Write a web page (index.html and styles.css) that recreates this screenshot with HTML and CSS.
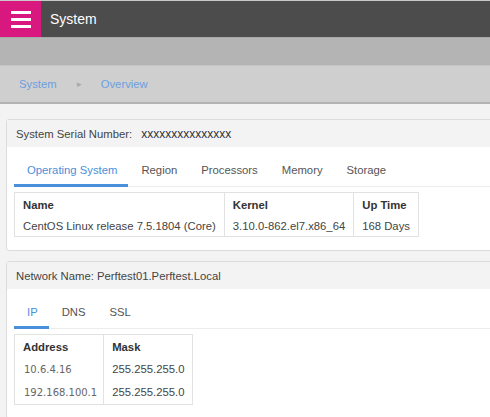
FILE: index.html
```
<!DOCTYPE html>
<html lang="en">
<head>
    <meta charset="UTF-8">
    <title>System</title>
    <link rel="stylesheet" href="styles.css">
</head>
<body>
    <div class="topbar">
        <div class="menu-btn">
            <svg width="20" height="18" viewBox="0 0 20 18">
                <rect x="0" y="1" width="20" height="3" fill="#fff"/>
                <rect x="0" y="8" width="20" height="3" fill="#fff"/>
                <rect x="0" y="15" width="20" height="3" fill="#fff"/>
            </svg>
        </div>
        <div class="title">System</div>
    </div>
    <div class="subbar"></div>
    <div class="breadcrumb">
        <a>System</a>
        <span class="sep">&#9656;</span>
        <a>Overview</a>
    </div>

    <div class="content">
        <div class="card">
            <div class="card-header">System Serial Number: <span class="serial">xxxxxxxxxxxxxxx</span></div>
            <div class="card-body">
                <div class="tabs">
                    <div class="tab active">Operating System</div>
                    <div class="tab">Region</div>
                    <div class="tab">Processors</div>
                    <div class="tab">Memory</div>
                    <div class="tab">Storage</div>
                </div>
                <table class="info">
                    <tr><th>Name</th><th>Kernel</th><th>Up Time</th></tr>
                    <tr><td>CentOS Linux release 7.5.1804 (Core)</td><td>3.10.0-862.el7.x86_64</td><td>168 Days</td></tr>
                </table>
            </div>
        </div>

        <div class="card">
            <div class="card-header">Network Name: Perftest01.Perftest.Local</div>
            <div class="card-body">
                <div class="tabs">
                    <div class="tab active">IP</div>
                    <div class="tab">DNS</div>
                    <div class="tab">SSL</div>
                </div>
                <table class="info net">
                    <tr><th>Address</th><th>Mask</th></tr>
                    <tr><td class="addr">10.6.4.16</td><td>255.255.255.0</td></tr>
                    <tr><td class="addr">192.168.100.1</td><td>255.255.255.0</td></tr>
                </table>
            </div>
        </div>
    </div>
</body>
</html>
```

FILE: styles.css
```
html, body {
    overflow: hidden;
}
body {
    margin: 0;
    background-color: #f3f3f3;
    font-family: "Liberation Sans", Arial, sans-serif;
    font-size: 11.3px;
    color: #333;
}
.topbar {
    display: flex;
    align-items: center;
    height: 36px;
    border-top: 1px solid #c9c9c9;
    background-color: #4c4c4c;
}
.menu-btn {
    display: flex;
    align-items: center;
    justify-content: center;
    width: 41px;
    height: 36px;
    background-color: #d8187f;
}
.title {
    margin-left: 9px;
    color: #fff;
    font-size: 14px;
}
.subbar {
    height: 27px;
    border-top: 1px solid #a8a8a8;
    background-color: #b4b4b4;
}
.breadcrumb {
    display: flex;
    align-items: center;
    height: 36px;
    padding-left: 19px;
    border-top: 1px solid #c4c4c4;
    border-bottom: 2px solid #b3b3b3;
    background-color: #cfcfcf;
}
.breadcrumb a {
    color: #6b9fe0;
}
.breadcrumb .sep {
    margin: 0 19px 0 20px;
    color: #a9a9a9;
    font-size: 9px;
}
.content {
    padding: 15px 0 0 6px;
}
.card {
    margin: 0 -12px 10px 0;
    border: 1px solid #dcdcdc;
    border-radius: 3px;
    background-color: #fff;
}
.card-header {
    height: 27px;
    line-height: 28px;
    padding-left: 9px;
    background-color: #f3f3f3;
    color: #444;
}
.serial {
    margin-left: 6px;
    color: #333;
    font-size: 12px;
}
.card-body {
    padding: 0 7px 13px;
}
.tabs {
    display: flex;
    padding-top: 13px;
    border-bottom: 1px solid #ececec;
}
.tab {
    padding: 4px 11px 8px 13px;
    margin-bottom: -1px;
    border-bottom: 3px solid transparent;
    color: #555;
}
.tab.active {
    color: #4a8fdb;
    border-bottom-color: #4a8fdb;
}
.info {
    margin-top: 5px;
    border-collapse: collapse;
    border: 1px solid #e2e2e2;
}
.info th, .info td {
    padding: 5px 8px 4px;
    border-left: 1px solid #e2e2e2;
    text-align: left;
    white-space: nowrap;
}
.info th {
    padding-top: 6px;
    font-weight: bold;
    color: #333;
}
.info td {
    color: #444;
}
.net th {
    padding-bottom: 5px;
}
.net td {
    padding-top: 5px;
    padding-bottom: 6px;
}
.net td.addr {
    padding-left: 9px;
    padding-right: 6px;
    color: #666;
    font-family: "DejaVu Sans", sans-serif;
    font-size: 10px;
}
```
